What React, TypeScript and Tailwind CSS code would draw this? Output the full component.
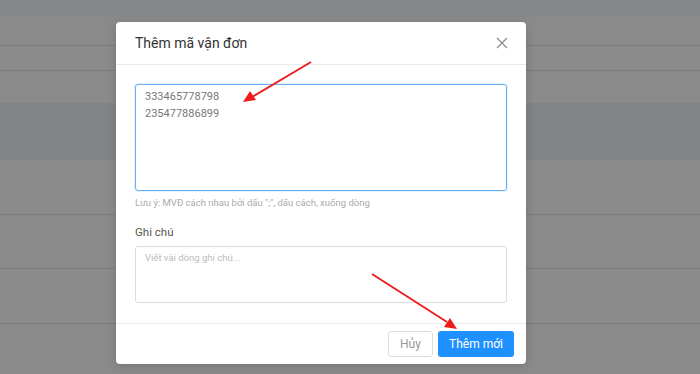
import React from "react";

export default function App() {
  return (
    <div className="relative w-[700px] h-[374px] overflow-hidden bg-[#8a8a8a]" style={{ fontFamily: "Roboto, 'Noto Sans', sans-serif" }}>
      <div className="flex flex-col">
        <div className="h-[17px] bg-[#85878a]" />
        <div className="h-[29px] bg-[#8a8a8a] border-b border-[#7b7b7b]" />
        <div className="h-[25px] bg-[#8a8a8a] border-b border-[#7b7b7b]" />
        <div className="h-[32px] bg-[#8a8a8a]" />
        <div className="h-[57px] bg-[#828385]" />
        <div className="h-[55px] bg-[#8a8a8a] border-b border-[#7b7b7b]" />
        <div className="h-[54px] bg-[#8a8a8a] border-b border-[#7b7b7b]" />
        <div className="h-[55px] bg-[#8a8a8a] border-b border-[#7b7b7b]" />
        <div className="h-[50px] bg-[#8a8a8a]" />
      </div>

      <div className="absolute left-[116px] top-[22px] w-[410px] h-[342px] bg-white rounded-[4px] flex flex-col shadow-[0_2px_8px_rgba(0,0,0,0.15)]">
        <div className="h-[43px] shrink-0 flex items-center justify-between pl-[19px] pr-[16px] border-b border-[#ebebeb]">
          <span className="text-[14px] text-[#333]">Thêm mã vận đơn</span>
          <svg width="12" height="12" viewBox="0 0 12 12" className="mr-[2px]">
            <path d="M1 1L11 11M11 1L1 11" stroke="#8c8c8c" strokeWidth="1.2" />
          </svg>
        </div>
        <div className="flex-1 flex flex-col px-[19px] pt-[19px]">
          <div className="h-[107px] w-[372px] border border-[#6aaef5] rounded-[3px] px-[9px] pt-[3px] text-[11px] leading-[17px] text-[#777] shadow-[0_0_0_1px_rgba(24,144,255,0.12)]">
            <div>333465778798</div>
            <div>235477886899</div>
          </div>
          <div className="mt-[5px] text-[9.5px] text-[#aaa] leading-[13px]">
            Lưu ý: MVĐ cách nhau bởi dấu ";", dấu cách, xuống dòng
          </div>
          <div className="mt-[16px] text-[11.5px] text-[#555] leading-[14px]">Ghi chú</div>
          <div className="mt-[7px] h-[57px] w-[372px] border border-[#dcdcdc] rounded-[3px] px-[9px] pt-[4px] text-[9.5px] text-[#bbb] leading-[14px]">
            Viết vài dòng ghi chú...
          </div>
        </div>
        <div className="h-[41px] shrink-0 border-t border-[#ebebeb] flex items-start justify-end gap-[5px] pr-[12px] pt-[7px]">
          <div className="h-[26px] w-[45px] border border-[#dcdcdc] rounded-[3px] flex items-center justify-center text-[12px] text-[#999]">Hủy</div>
          <div className="h-[26px] w-[76px] bg-[#1e90ff] rounded-[3px] flex items-center justify-center text-[12px] text-white">Thêm mới</div>
        </div>
      </div>

      <svg className="absolute left-0 top-0" width="700" height="374" viewBox="0 0 700 374">
        <line x1="311" y1="62" x2="252" y2="97" stroke="#ee1c1c" strokeWidth="2" />
        <polygon points="243,102 250,91 256,100" fill="#ee1c1c" />
        <line x1="372" y1="274" x2="447" y2="322" stroke="#ee1c1c" strokeWidth="2" />
        <polygon points="457,329 444,327 450,318" fill="#ee1c1c" />
      </svg>
    </div>
  );
}
